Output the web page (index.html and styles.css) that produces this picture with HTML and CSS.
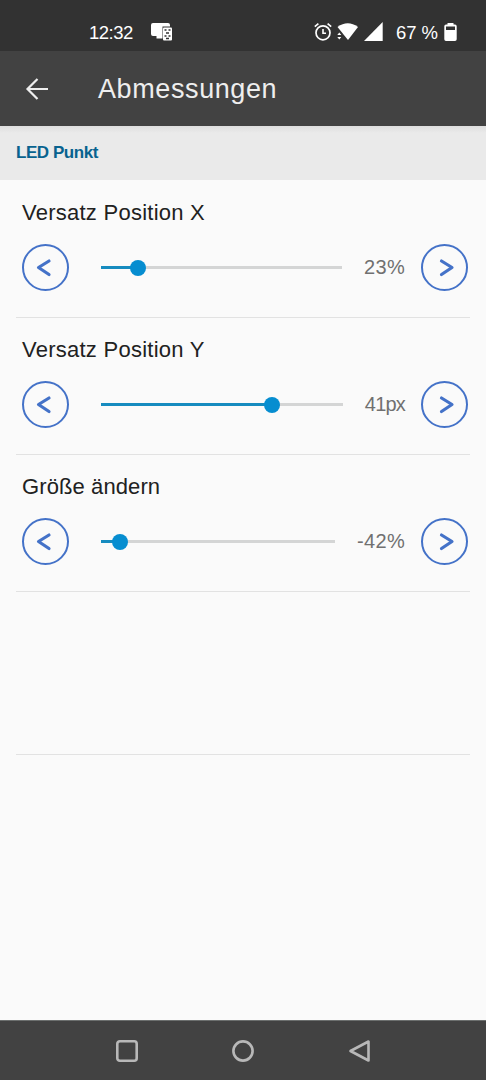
FILE: index.html
```
<!DOCTYPE html>
<html lang="de">
  <head>
    <meta charset="UTF-8" />
    <meta name="viewport" content="width=device-width, initial-scale=1.0" />
    <title>Abmessungen</title>
    <link rel="stylesheet" href="styles.css">
  </head>
  <body>
    <div class="screen">
      <!-- Status bar -->
      <div class="status-bar">
        <span class="clock">12:32</span>
        <svg class="cast" width="22" height="20" viewBox="0 0 22 20">
          <path d="M2 1h15a2 2 0 0 1 2 2v1.500h-7.500V14H2a2 2 0 0 1-2-2V3a2 2 0 0 1 2-2zM5.500 13.500h6v3h-6z" fill="#fff" />
          <rect x="12" y="5.500" width="9" height="13" rx="1" fill="#fff" />
          <path d="M13.500 8h2M17.500 8h2M13.500 14h2M17.500 14h2M15 11h3M15 16.500h3" stroke="#323232" stroke-width="1.300" fill="none" />
        </svg>
        <svg class="alarm" width="18" height="20" viewBox="0 0 18 20">
          <circle cx="9" cy="10.800" r="7" fill="none" stroke="#fff" stroke-width="1.700" />
          <path d="M9 7v4.300h3" fill="none" stroke="#fff" stroke-width="1.600" />
          <path d="M.8 4.600l3.600-3M17.200 4.600l-3.600-3" stroke="#fff" stroke-width="1.700" />
        </svg>
        <svg class="wifi" width="22" height="20" viewBox="0 0 22 20">
          <path d="M.5 5Q10.700-2.500 21 5L11 18z" fill="#fff" />
          <path d="M.3 13L2.300 10.500L4.300 13zM.3 15L2.300 17.500L4.300 15z" fill="#fff" />
        </svg>
        <svg class="signal" width="19" height="20" viewBox="0 0 19 20">
          <path d="M18.700 0v19H0z" fill="#fff" />
        </svg>
        <span class="battery-text">67 %</span>
        <svg class="battery" width="13" height="20" viewBox="0 0 13 20">
          <path d="M3.500 1h6v1.500H11a1.700 1.700 0 0 1 1.700 1.700v13.100A1.700 1.700 0 0 1 11 19H2a1.700 1.700 0 0 1-1.700-1.700V4.200A1.700 1.700 0 0 1 2 2.500h1.500z" fill="#fff" />
          <path d="M2 4.500h9V8H2z" fill="#323232" />
        </svg>
      </div>

      <!-- App bar -->
      <div class="app-bar">
        <svg class="back" width="24" height="24" viewBox="0 0 24 24">
          <path d="M23 12H2.500M12.500 2L2.500 12l10 10" fill="none" stroke="#eee" stroke-width="2.200" />
        </svg>
        <h1 class="title">Abmessungen</h1>
      </div>

      <div class="section-title">LED Punkt</div>

      <div class="settings">
        <div class="setting">
          <div class="label">Versatz Position X</div>
          <div class="controls">
            <button class="step"><svg width="47" height="47" viewBox="0 0 47 47"><path d="M27 17L16.500 23.500L27 30.500" /></svg></button>
            <div class="slider">
              <div class="fill" style="width: 15.400%"></div>
              <div class="thumb" style="left: 15.400%"></div>
            </div>
            <span class="value">23%</span>
            <button class="step"><svg width="47" height="47" viewBox="0 0 47 47"><path d="M20.500 17L31 23.500L20.500 30.500" /></svg></button>
          </div>
        </div>

        <div class="setting">
          <div class="label">Versatz Position Y</div>
          <div class="controls">
            <button class="step"><svg width="47" height="47" viewBox="0 0 47 47"><path d="M27 17L16.500 23.500L27 30.500" /></svg></button>
            <div class="slider">
              <div class="fill" style="width: 70.700%"></div>
              <div class="thumb" style="left: 70.700%"></div>
            </div>
            <span class="value pixels">41px</span>
            <button class="step"><svg width="47" height="47" viewBox="0 0 47 47"><path d="M20.500 17L31 23.500L20.500 30.500" /></svg></button>
          </div>
        </div>

        <div class="setting">
          <div class="label size-label">Größe ändern</div>
          <div class="controls">
            <button class="step"><svg width="47" height="47" viewBox="0 0 47 47"><path d="M27 17L16.500 23.500L27 30.500" /></svg></button>
            <div class="slider">
              <div class="fill" style="width: 8.100%"></div>
              <div class="thumb" style="left: 8.100%"></div>
            </div>
            <span class="value">-42%</span>
            <button class="step"><svg width="47" height="47" viewBox="0 0 47 47"><path d="M20.500 17L31 23.500L20.500 30.500" /></svg></button>
          </div>
        </div>

        <div class="setting empty"></div>
      </div>

      <!-- Navigation buttons -->
      <div class="nav-bar">
        <svg width="24" height="24" viewBox="0 0 24 24"><rect x="2.300" y="2.300" width="19.400" height="19.400" rx="2.500" /></svg>
        <svg width="24" height="24" viewBox="0 0 24 24"><circle cx="12" cy="12" r="9.600" /></svg>
        <svg width="24" height="24" viewBox="0 0 24 24"><path d="M21.500 2.500v19L3.500 12z" /></svg>
      </div>
    </div>
  </body>
</html>
```
FILE: styles.css
```
* {
  box-sizing: border-box;
}

body {
  margin: 0;
  background-color: #fafafa;
  font-family: "Liberation Sans", Arial, sans-serif;
}

svg {
  display: block;
  flex: none;
}

.screen {
  display: flex;
  flex-direction: column;
  height: 1080px;
  width: 486px;
  overflow: hidden;
}

/* Status bar */
.status-bar {
  display: flex;
  align-items: center;
  height: 51px;
  padding: 14px 29px 1px 89px;
  background-color: #323232;
  color: #fff;
  font-size: 18.5px;
  line-height: 37px;
  white-space: nowrap;
}

.clock {
  width: 62px;
  letter-spacing: -0.5px;
}

.alarm {
  margin-left: 141px;
}

.wifi {
  margin-left: 5px;
}

.signal {
  margin-left: 5px;
}

.battery-text {
  width: 48px;
  margin-left: 13px;
  letter-spacing: -0.1px;
}

/* App bar */
.app-bar {
  display: flex;
  align-items: center;
  height: 75px;
  padding-left: 25px;
  background-color: #424242;
}

.title {
  margin: 2px 0 0 49px;
  color: #eee;
  font-size: 27px;
  font-weight: normal;
  letter-spacing: 0.6px;
}

.section-title {
  height: 54px;
  padding-left: 16px;
  background: linear-gradient(#dedede, #eaeaea 7px);
  color: #08638f;
  font-size: 17px;
  font-weight: bold;
  line-height: 54px;
  letter-spacing: -0.45px;
}

/* Slider settings */
.settings {
  flex: 1;
  padding: 0 16px;
}

.setting {
  height: 137px;
  padding: 19px 2px 0 6px;
  border-bottom: 1px solid #e2e2e2;
}

.setting:first-child {
  height: 138px;
  padding-top: 20px;
}

.setting.empty {
  height: 163px;
}

.label {
  height: 44px;
  color: #212121;
  font-size: 22px;
  line-height: 26px;
  letter-spacing: 0.25px;
}

.size-label {
  letter-spacing: 0.1px;
}

.controls {
  display: flex;
  align-items: center;
}

.step {
  flex: none;
  width: 47px;
  height: 47px;
  padding: 0;
  border: 2px solid #4472c8;
  border-radius: 50%;
  background: none;
}

.step svg {
  margin: -2px;
  fill: none;
  stroke: #4472c8;
  stroke-width: 3.2;
  stroke-linecap: round;
  stroke-linejoin: round;
}

.slider {
  position: relative;
  flex: 1;
  height: 3px;
  margin: 0 22px 0 32px;
  background-color: #d4d5d5;
}

.fill {
  height: 3px;
  background-color: #168bbf;
}

.thumb {
  position: absolute;
  top: -6.5px;
  width: 16px;
  height: 16px;
  margin-left: -8px;
  border-radius: 50%;
  background-color: #068dd0;
}

.value {
  margin-right: 16px;
  color: #707070;
  font-size: 20px;
  letter-spacing: 0.3px;
}

.pixels {
  letter-spacing: -0.8px;
}

/* Navigation bar */
.nav-bar {
  display: flex;
  align-items: center;
  gap: 92px;
  height: 60px;
  padding-left: 115px;
  border-top: 1px solid #6c6f6e;
  background-color: #424242;
}

.nav-bar svg {
  fill: none;
  stroke: #b8b8b8;
  stroke-width: 2.6;
  stroke-linejoin: round;
}
```
